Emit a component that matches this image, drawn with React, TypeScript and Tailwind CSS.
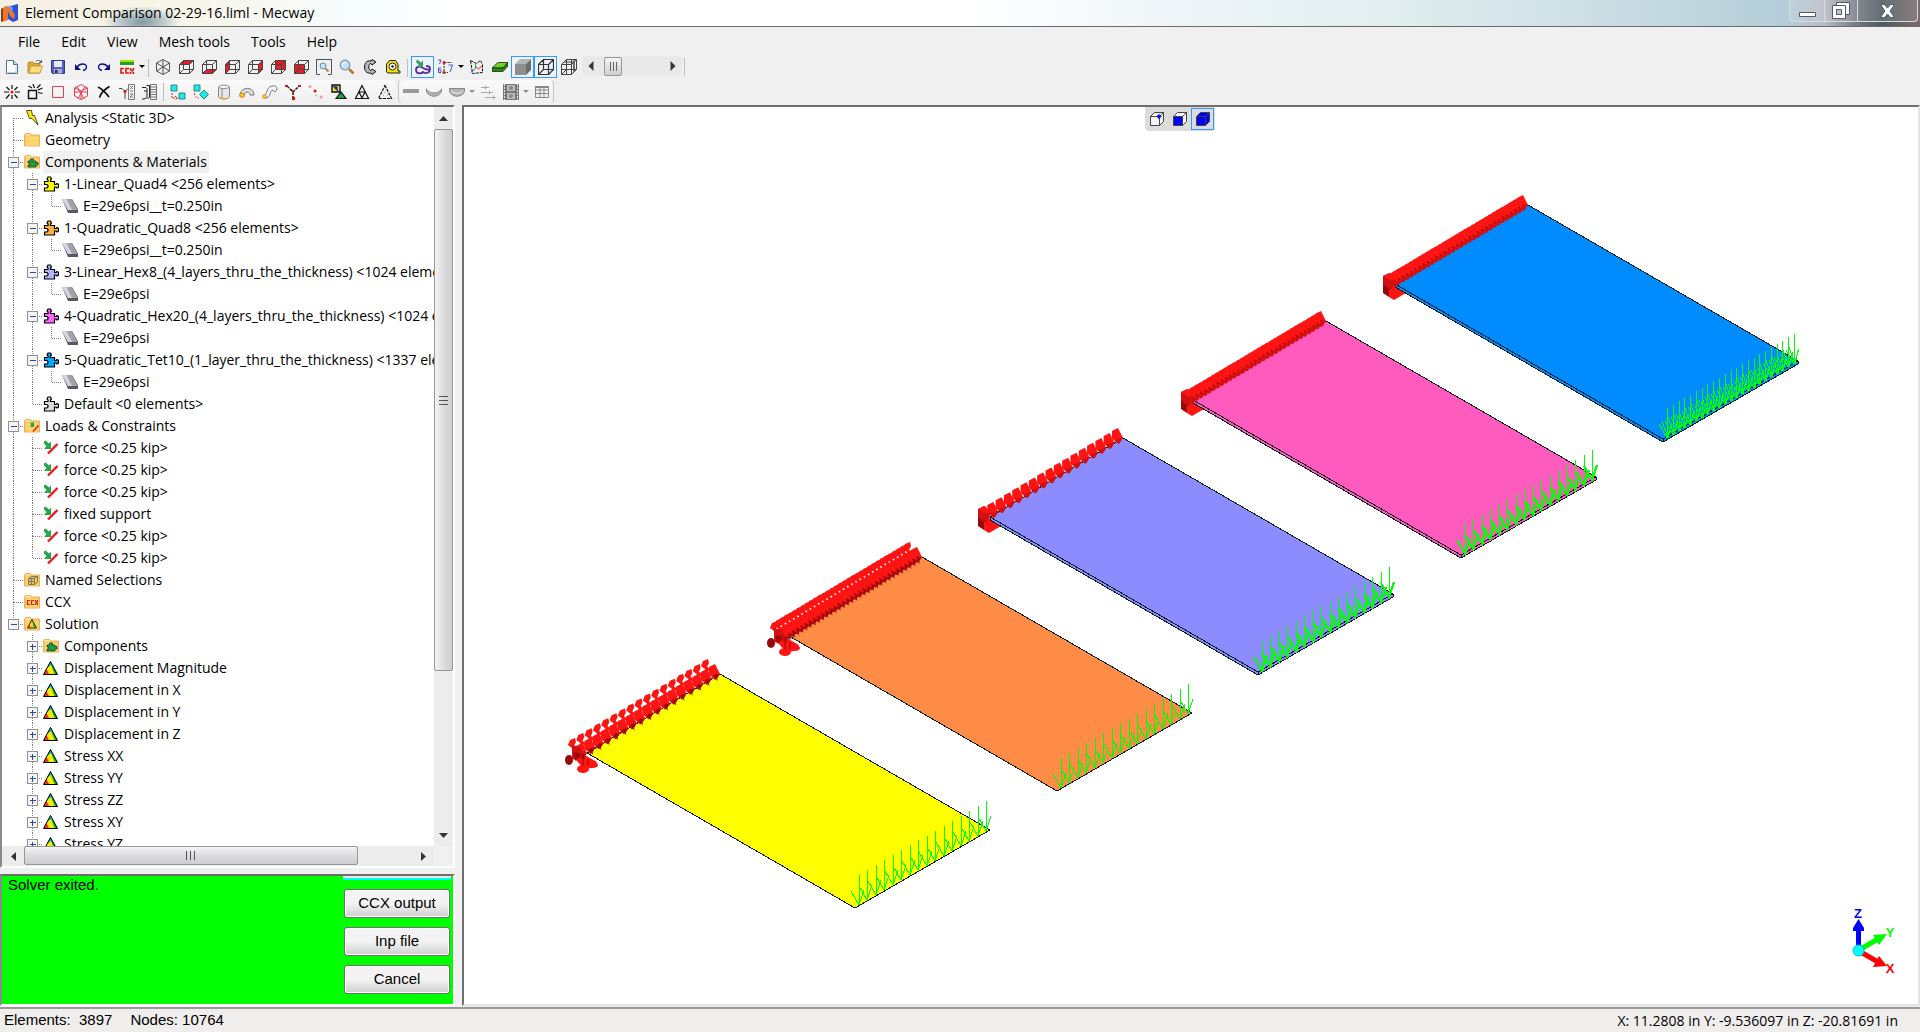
import { useState, type ReactNode } from "react";

type TreeRow = {
  lines: string;
  icon: string;
  label: string;
  selected?: boolean;
};

type Plate = {
  name: string;
  fill: string;
  x: number;
  y: number;
  thick: number;
  nodes: number;
  discs: boolean;
  arrows: number;
  bold: boolean;
};

// one letter per 19px column: f first, v through, t branch, l last, m/e open, p closed
const treeRows: TreeRow[] = [
  { lines: "f", icon: "bolt", label: "Analysis <Static 3D>" },
  { lines: "t", icon: "folder", label: "Geometry" },
  { lines: "m", icon: "folderPuzzle", label: "Components & Materials", selected: true },
  { lines: "vm", icon: "puzzle:#ffff00", label: "1-Linear_Quad4 <256 elements>" },
  { lines: "vvl", icon: "material", label: "E=29e6psi__t=0.250in" },
  { lines: "vm", icon: "puzzle:#ffb040", label: "1-Quadratic_Quad8 <256 elements>" },
  { lines: "vvl", icon: "material", label: "E=29e6psi__t=0.250in" },
  { lines: "vm", icon: "puzzle:#b4b4ff", label: "3-Linear_Hex8_(4_layers_thru_the_thickness) <1024 elements>" },
  { lines: "vvl", icon: "material", label: "E=29e6psi" },
  { lines: "vm", icon: "puzzle:#ff66ff", label: "4-Quadratic_Hex20_(4_layers_thru_the_thickness) <1024 elements>" },
  { lines: "vvl", icon: "material", label: "E=29e6psi" },
  { lines: "vm", icon: "puzzle:#00a8ff", label: "5-Quadratic_Tet10_(1_layer_thru_the_thickness) <1337 elements>" },
  { lines: "vvl", icon: "material", label: "E=29e6psi" },
  { lines: "vl", icon: "puzzle:#dcdcdc", label: "Default <0 elements>" },
  { lines: "m", icon: "folderLoad", label: "Loads & Constraints" },
  { lines: "vt", icon: "load", label: "force <0.25 kip>" },
  { lines: "vt", icon: "load", label: "force <0.25 kip>" },
  { lines: "vt", icon: "load", label: "force <0.25 kip>" },
  { lines: "vt", icon: "load", label: "fixed support" },
  { lines: "vt", icon: "load", label: "force <0.25 kip>" },
  { lines: "vl", icon: "load", label: "force <0.25 kip>" },
  { lines: "t", icon: "folderNamed", label: "Named Selections" },
  { lines: "t", icon: "folderCcx", label: "CCX" },
  { lines: "e", icon: "folderResult", label: "Solution" },
  { lines: " p", icon: "folderPuzzle", label: "Components" },
  { lines: " p", icon: "result", label: "Displacement Magnitude" },
  { lines: " p", icon: "result", label: "Displacement in X" },
  { lines: " p", icon: "result", label: "Displacement in Y" },
  { lines: " p", icon: "result", label: "Displacement in Z" },
  { lines: " p", icon: "result", label: "Stress XX" },
  { lines: " p", icon: "result", label: "Stress YY" },
  { lines: " p", icon: "result", label: "Stress ZZ" },
  { lines: " p", icon: "result", label: "Stress XY" },
  { lines: " p", icon: "result", label: "Stress YZ" }
];

const plates: Plate[] = [
  { name: "tet10", fill: "#008cff", x: 1395, y: 284, thick: 3, nodes: 33, discs: false, arrows: 23, bold: false },
  { name: "hex20", fill: "#ff5abe", x: 1193, y: 400, thick: 3, nodes: 33, discs: false, arrows: 16, bold: true },
  { name: "hex8", fill: "#8c8cff", x: 990, y: 517, thick: 3, nodes: 17, discs: false, arrows: 16, bold: true },
  { name: "quad8", fill: "#ff8c46", x: 789, y: 636, thick: 0, nodes: 33, discs: true, arrows: 16, bold: false },
  { name: "quad4", fill: "#ffff00", x: 587, y: 753, thick: 0, nodes: 17, discs: true, arrows: 16, bold: false }
];

function Icon({ children, title }: { children: ReactNode; title?: string }) {
  return (
    <svg width="16" height="16" viewBox="0 0 16 16" fill="none" className="shrink-0" aria-label={title}>
      {children}
    </svg>
  );
}

function Puzzle({ fill }: { fill: string }) {
  return (
    <path
      d="M1.500 5.500h3.500V4L4 3l1-2h2.500l1 2-1 1v1.500h4v3h1.500l1-1 1.500 1v2.500l-1.500 1-1-1h-1.500v4h-10v-3h2.500l1-1v-1.500l-1-1H1.500z"
      fill={fill}
      stroke="#000"
      strokeWidth="1.200"
    />
  );
}

function Folder() {
  return (
    <>
      <path d="M.5 14V3l1-1.500h5l1 1.500h8v11z" fill="#f5c85f" stroke="#efb05a" />
      <path d="M2 4.500h12.500v9H2z" fill="#fdd56c" />
      <path d="M1 3.500 2 2h4l1 1.500z" fill="#f8e6b0" />
    </>
  );
}

function ResultTriangle() {
  return (
    <>
      <path d="M7.500 1.500 14.500 14.500H.5z" fill="#00b140" />
      <path d="M7.500 1.500 11 8 8 6 4 8z" fill="#00b0a8" />
      <path d="M4 8 8 5l3.500 9H4z" fill="#ffe800" />
      <path d="M3.500 9 6 14H1z" fill="#e8342c" />
      <path d="M7.500 1.500 14.500 14.500H.5z" stroke="#000" />
    </>
  );
}

function LoadMark() {
  return (
    <>
      <path d="M1 1.500 2.500.5l3.500 3 2-2v7.500H1L3.500 6 1 3.500z" fill="#22a84b" />
      <path d="M14.500 4 5 13.500" stroke="#f01820" strokeWidth="2.400" />
    </>
  );
}

function TreeIcon({ kind }: { kind: string }) {
  if (kind.startsWith("puzzle:")) {
    return (
      <Icon>
        <Puzzle fill={kind.slice(7)} />
      </Icon>
    );
  }
  switch (kind) {
    case "bolt":
      return (
        <Icon>
          <path d="M2.500.5h5l1 5h2l3.500 9.500-6-6.500H5.500z" fill="#ffee00" stroke="#222" strokeWidth=".8" />
        </Icon>
      );
    case "material":
      return (
        <Icon>
          <path d="M0 1h10l6 10.500v3.500H6z" fill="#5a5a5e" />
          <path d="M0 1h9.500l6 11H6z" fill="#a2a2ac" />
          <path d="M0 1h4.500L10 12H6z" fill="#d4d4de" />
        </Icon>
      );
    case "load":
      return (
        <Icon>
          <LoadMark />
        </Icon>
      );
    case "result":
      return (
        <Icon>
          <ResultTriangle />
        </Icon>
      );
    case "folderPuzzle":
      return (
        <Icon>
          <Folder />
          <path d="M4 7h2.500V5h3v2H12v1.500h2v2.500h-2v2H4v-2h1.500V9H4z" fill="#1f9a3c" stroke="#143" strokeWidth=".8" />
        </Icon>
      );
    case "folderLoad":
      return (
        <Icon>
          <Folder />
          <path d="M6 4l1.500 1L10 4v5H6l1-2z" fill="#22a84b" />
          <path d="M14.500 7.500 9 13.500" stroke="#f01820" strokeWidth="1.500" />
        </Icon>
      );
    case "folderNamed":
      return (
        <Icon>
          <Folder />
          <path d="M4.500 6.500h6v6h-6zM4.500 6.500l3-2h6l-3 2M13.500 4.500v6l-3 2M7.500 6.500v6M4.500 9.500h6" fill="#e8c440" stroke="#77776a" />
        </Icon>
      );
    case "folderCcx":
      return (
        <Icon>
          <Folder />
          <path d="M6 6.500H3.500v4H6M10 6.500H7.500v4H10M11.500 6v1.500l2 2V11M13.500 6v1.500l-2 2V11" stroke="#e01818" strokeWidth="1.200" />
        </Icon>
      );
    case "folderResult":
      return (
        <Icon>
          <Folder />
          <path d="M8 3.500 12.500 12h-9z" fill="#f4dc00" stroke="#222" />
          <path d="M8 4l4 8h-2z" fill="#0a9a50" />
          <path d="M4 12l1.500-3L7 12z" fill="#e8342c" />
        </Icon>
      );
    default:
      return (
        <Icon>
          <Folder />
        </Icon>
      );
  }
}

function TreeLine({ kind }: { kind: string }) {
  const box = kind === "m" || kind === "e" || kind === "p";
  const up = "vtlmep".includes(kind);
  const down = "fvtmp".includes(kind);
  const across = kind !== "v" && kind !== " ";
  return (
    <svg width="19" height="22" viewBox="0 0 19 22" fill="none" className="shrink-0 overflow-visible">
      <g stroke="#808080" strokeDasharray="1 1" shapeRendering="crispEdges">
        {up && <path d="M10.500 0v11" />}
        {down && <path d="M10.500 11v11" />}
        {across && <path d="M11 11.500h10" />}
      </g>
      {box && (
        <g shapeRendering="crispEdges">
          <rect x="5.500" y="6.500" width="10" height="10" rx="1" fill="#f4f4f4" stroke="#919191" />
          <path d="M8 11.500h6" stroke="#2b4a9b" />
          {kind === "p" && <path d="M10.500 9v6" stroke="#2b4a9b" />}
        </g>
      )}
    </svg>
  );
}

const cubeFaces: Record<string, string> = {
  top: "M1.500 5.500 5.500 1.500h10l-4 4z",
  bottom: "M1.500 14.500 5.500 10.500h10l-4 4z",
  left: "M1.500 5.500 5.500 1.500v9l-4 4z",
  right: "M11.500 5.500 15.500 1.500v9l-4 4z",
  back: "M5.500 1.500h10v9h-10z",
  front: "M1.500 5.500h10v9h-10z"
};

function Cube({ face, color = "#e81c24" }: { face?: string; color?: string }) {
  return (
    <Icon title={face}>
      {face && <path d={cubeFaces[face]} fill={color} />}
      <path
        d="M1.500 5.500h10v9h-10zM5.500 1.500h10v9h-10zM1.500 5.500l4-4M11.500 5.500l4-4M1.500 14.500l4-4M11.500 14.500l4-4"
        stroke="#444"
        strokeWidth="1"
      />
    </Icon>
  );
}

function ToolButton({ label, active, children }: { label: string; active?: boolean; children: ReactNode }) {
  return (
    <button
      type="button"
      aria-label={label}
      className={`flex h-[22px] w-[23px] shrink-0 items-center justify-center ${
        active ? "border border-[#3399ff] bg-[#eef3f9]" : "hover:bg-[#dfeaf7]"
      }`}
    >
      {children}
    </button>
  );
}

function Caret({ gray }: { gray?: boolean }) {
  return (
    <svg width="8" height="16" viewBox="0 0 8 16" className="shrink-0">
      <path d="M1 6h6l-3 3z" fill={gray ? "#8c8c8c" : "#000"} />
    </svg>
  );
}

function Separator() {
  return <span className="mx-[2px] h-[18px] w-px shrink-0 bg-[#bdbdbd]" />;
}

function TopToolbar() {
  return (
    <div className="flex h-[24px] shrink-0 items-start">
      <ToolButton label="New">
        <Icon>
          <path d="M2.500 1.500h7l4 4v9h-11z" fill="#fff" stroke="#51718f" />
          <path d="M9.500 1.500v4h4" fill="#c8dcf0" stroke="#51718f" />
          <path d="M12 7v6.500H4" stroke="#b8d0e8" />
        </Icon>
      </ToolButton>
      <ToolButton label="Open">
        <Icon>
          <path d="M1 14V4l1-1h4l1 1.500h6V14z" fill="#e0a838" stroke="#b07818" strokeWidth=".8" />
          <path d="M1.500 14 4 7h11.500L13 14z" fill="#fbdc80" stroke="#c08c28" strokeWidth=".8" />
          <path d="M9 2.500c2-2 4-1 5 .5M14.500 1v2.500H12" stroke="#456" />
        </Icon>
      </ToolButton>
      <ToolButton label="Save">
        <Icon>
          <path d="M1.500 1.500h13v13h-12l-1-1z" fill="#5560c0" stroke="#30388c" />
          <path d="M4 2h8v6H4z" fill="#e4e8fa" />
          <path d="M4 10h8v4.500H4z" fill="#aab0c8" />
          <path d="M5 11h2.500v3H5z" fill="#222a60" />
        </Icon>
      </ToolButton>
      <ToolButton label="Undo">
        <Icon>
          <path d="M4 8c3-4 9-4 9.500 0 0 2-1.500 3-3.500 3.500" stroke="#10108c" strokeWidth="1.300" />
          <path d="M2 5v6h6z" fill="#10108c" />
        </Icon>
      </ToolButton>
      <ToolButton label="Redo">
        <Icon>
          <path d="M12 8C9 4 3 4 2.500 8c0 2 1.500 3 3.500 3.500" stroke="#10108c" strokeWidth="1.300" />
          <path d="M14 5v6H8z" fill="#10108c" />
        </Icon>
      </ToolButton>
      <ToolButton label="Solve with CCX">
        <Icon>
          <path d="M1 1h14v2H1z" fill="#a8e000" />
          <path d="M1 3h14v3H1z" fill="#22a022" />
          <path d="M5 9.500H2v4.500h3M10 9.500H7V14h3M11.500 9v1.500l3 3V15M14.500 9v1.500l-3 3V15" stroke="#e81010" strokeWidth="1.600" />
        </Icon>
      </ToolButton>
      <span className="mt-[3px] flex">
        <Caret />
        <Separator />
      </span>
      <ToolButton label="Isometric view">
        <Icon>
          <path d="M8 .5 14.500 4v8L8 15.500 1.500 12V4zM8 .5v15M1.500 4l13 8M14.500 4l-13 8" stroke="#555" />
        </Icon>
      </ToolButton>
      {["top", "bottom", "left", "right", "back", "front"].map((face) => (
        <ToolButton key={face} label={`View ${face}`}>
          <Cube face={face} />
        </ToolButton>
      ))}
      <ToolButton label="Fit to window">
        <Icon>
          <path d="M4 .5H.5v15H4M12 .5h3.500v15H12M.5.5h15" stroke="#4c5260" />
          <circle cx="7" cy="7" r="3" fill="#c4e2f8" stroke="#6a8cae" />
          <path d="M9.500 9.500 12.500 12.500" stroke="#c08030" strokeWidth="2" />
        </Icon>
      </ToolButton>
      <ToolButton label="Zoom">
        <Icon>
          <path d="M10 10l4.500 4.500" stroke="#b87828" strokeWidth="2.600" />
          <circle cx="6" cy="6" r="4.800" fill="#c4e2f8" stroke="#7892b0" strokeWidth="1.200" />
          <path d="M3.500 5.500c.5-1.500 1.500-2 3-2" stroke="#fff" strokeWidth="1.200" />
        </Icon>
      </ToolButton>
      <ToolButton label="Rotate">
        <Icon>
          <path d="M9 2C4 1 2.500 5 2.500 8S4 15 9 14l1 1.500 4-3-4-2.500-1 1.500c-3 0-3-7 0-7l1 1.500 4-3-4-2.500z" fill="#b8b8bc" stroke="#111" />
        </Icon>
      </ToolButton>
      <ToolButton label="Measure">
        <Icon>
          <path d="M1.500 13V5l3-3.500h6L13 5v7h2v2H3z" fill="#f4e400" stroke="#222" />
          <circle cx="7.500" cy="7.500" r="3.500" fill="#fff" stroke="#222" />
          <circle cx="7.500" cy="7.500" r="1.200" fill="#111" />
        </Icon>
      </ToolButton>
      <span className="mt-[3px] flex px-px">
        <Separator />
      </span>
      <ToolButton label="Show loads" active>
        <Icon>
          <path d="M1 11c0-4 4-4 7-2s7 2 7 0-2-2-4-2M1 11c0 4 5 4 7 2 3 2 7 1 7-3" stroke="#5a2ca0" strokeWidth="1.800" />
          <path d="M2 .5l4 3 2-2V8H2l2-2-3-3z" fill="#36a060" />
        </Icon>
      </ToolButton>
      <ToolButton label="Node numbers">
        <Icon>
          <path d="M6.500 3.500h7M6 4v9M6 13.500h4" stroke="#222" strokeDasharray="2 1" />
          <circle cx="6" cy="3.500" r="1.500" fill="#e01818" />
          <circle cx="6" cy="13.500" r="1.500" fill="#e01818" />
          <path d="M0 1h3L1.500 5M3 9H.5v4.500H3v-2.500H1M10.500 6h4L12 13" stroke="#3858e0" />
        </Icon>
      </ToolButton>
      <span className="mt-[3px] flex">
        <Caret />
      </span>
      <ToolButton label="Element axes">
        <Icon>
          <path d="M1.500 1.500l6 3 4-3 2 4v8l-10 1z" stroke="#111" strokeDasharray="3 1" />
          <path d="M6.500 9.500V4" stroke="#20b040" />
          <path d="M6 9.500 2 13.500" stroke="#2040e0" />
          <path d="M6.500 7.500l3 2.500L13 7" stroke="#e02020" />
        </Icon>
      </ToolButton>
      <ToolButton label="Shell thickness">
        <Icon>
          <path d="M0 9 6 3.500h10L11 9z" fill="#6fd616" stroke="#223" strokeWidth=".8" />
          <path d="M0 9h11l5-5.500V7l-5 5.500H0z" fill="#2a8a10" stroke="#223" strokeWidth=".8" />
        </Icon>
      </ToolButton>
      <ToolButton label="Show faces" active>
        <Icon>
          <path d="M0 5 5 0h11l-5 5z" fill="#b4b4b4" />
          <path d="M0 5h11v11H0z" fill="#8e8e8e" />
          <path d="M11 5l5-5v11l-5 5z" fill="#6c6c6c" />
        </Icon>
      </ToolButton>
      <ToolButton label="Show wireframe" active>
        <Icon>
          <path
            d="M.5 5.500h10v10H.5zM5.500.5h10v10h-10zM.5 5.500l5-5M10.500 5.500l5-5M.5 15.500l5-5M10.500 15.500l5-5"
            stroke="#333"
            strokeWidth="1.200"
          />
        </Icon>
      </ToolButton>
      <ToolButton label="Show element edges">
        <Icon>
          <path
            d="M.5 5.500h10v10H.5zM5.500.5h10v10h-10zM.5 5.500l5-5M10.500 5.500l5-5M.5 15.500l5-5M10.500 15.500l5-5M5.500 5v10M0 10.500h10M3 3h10v10M10.500 0v11M13 0v12"
            stroke="#444"
          />
        </Icon>
      </ToolButton>
      <div className="ml-[2px] flex h-[20px] w-[100px] items-center rounded-sm bg-[#e9e9e9] px-[6px]">
        <button type="button" aria-label="Scroll left" className="w-[16px]">
          <svg width="6" height="10" viewBox="0 0 6 10">
            <path d="M5.500 0v10L.5 5z" fill="#333" />
          </svg>
        </button>
        <span className="flex h-[19px] w-[18px] items-center justify-center gap-[2px] rounded-[2px] border border-[#979797] bg-gradient-to-b from-[#f4f4f4] to-[#cfd0d2]">
          <i className="h-[9px] w-px bg-[#666]" />
          <i className="h-[9px] w-px bg-[#666]" />
          <i className="h-[9px] w-px bg-[#666]" />
        </span>
        <button type="button" aria-label="Scroll right" className="ml-auto">
          <svg width="6" height="10" viewBox="0 0 6 10">
            <path d="M.5 0v10l5-5z" fill="#333" />
          </svg>
        </button>
      </div>
      <span className="mt-[2px] flex">
        <Separator />
      </span>
    </div>
  );
}

function MeshToolbar() {
  return (
    <div className="flex h-[25px] shrink-0 items-start">
      <div className="flex h-[23px] items-center rounded-r bg-gradient-to-b from-[#fafafa] to-[#efefef]">
        <ToolButton label="New node">
          <Icon>
            <path d="M8 5V1M5.500 6 2.500 3M10.500 6l3-3M5 8H0M11 8h5M5.500 10.500l-3.500 4M10.500 10.500l3 3.500M8 11v4" stroke="#111" strokeWidth="1.200" />
            <circle cx="8" cy="8" r="1.500" fill="#e01010" />
          </Icon>
        </ToolButton>
        <ToolButton label="New element">
          <Icon>
            <path d="M1.500 6.500h8v8h-8z" stroke="#111" strokeWidth="1.400" />
            <path d="M7.500 4 6 0M10 4l3.500-3.500M11 6l4.500-2M11 8.500l4.500 1M5 4 1.500 2" stroke="#111" strokeWidth="1.200" />
          </Icon>
        </ToolButton>
        <ToolButton label="Select faces">
          <Icon>
            <path d="M2.500 2.500h11v11h-11z" stroke="#e04058" />
          </Icon>
        </ToolButton>
        <ToolButton label="Select elements">
          <Icon>
            <path d="M8 .5 14.500 4v8L8 15.500 1.500 12V4zM8 7v8.500M1.500 4 8 7l6.500-3M4 2.500l7 12M12 2.500l-7 12M1.500 8h13" stroke="#e04058" />
          </Icon>
        </ToolButton>
        <ToolButton label="Delete">
          <Icon>
            <path d="M2 3c4 2 8 6 11 10M13.500 2.500C9 5 5 9 3.500 13.500" stroke="#111" strokeWidth="1.800" />
          </Icon>
        </ToolButton>
        <ToolButton label="Node coordinates">
          <Icon>
            <path d="M0 4.500h3l3 3M6 7.500V15M6 7.500l3-3" stroke="#444" />
            <circle cx="6" cy="7.500" r="1.500" fill="#e01010" />
            <path d="M9.500.5h6v15h-6zM11 2l3 3M14 2l-3 3M11 7h3M11 10h3l-3 3h3" stroke="#777" />
          </Icon>
        </ToolButton>
        <ToolButton label="Element properties">
          <Icon>
            <path d="M0 3.500h4l1 1v9l-3 1.500H0M2 7h3M4.500 1.500h3v12l-2 1" stroke="#222" />
            <path d="M8.500.5h6v15h-6zM9 3h5M9 5.500h5M9 8h5M9 10.500h5M9 13h5" stroke="#777" />
          </Icon>
        </ToolButton>
        <Separator />
        <ToolButton label="Translate">
          <Icon>
            <path d="M1 1h6v6H1zM9 9h6v6H9z" fill="#20e8f0" stroke="#387" />
            <path d="M2 9v5h5M5 12l2.500 2L5 16" stroke="#c02020" strokeDasharray="2 1" />
          </Icon>
        </ToolButton>
        <ToolButton label="Rotate copy">
          <Icon>
            <path d="M1 1h6v6H1zM11 6l4.500 4.500L11 15l-4.500-4.500z" fill="#20e8f0" stroke="#387" />
            <path d="M1.500 9c0 3 1 4 4 5" stroke="#c02020" strokeDasharray="2 1" />
          </Icon>
        </ToolButton>
        <ToolButton label="Extrude">
          <Icon>
            <path d="M2.500 3v10c2 2.500 9 2.500 11 0V3" fill="#e8e8ea" stroke="#888" />
            <path d="M2.500 3c2-2.500 9-2.500 11 0-2 2-9 2-11 0zM6 4.500v10" fill="#fff" stroke="#888" />
            <path d="M3 13.500c2 2 8 2 10 0" stroke="#f0a020" />
          </Icon>
        </ToolButton>
        <ToolButton label="Revolve">
          <Icon>
            <path d="M1 12c0-10 14-10 14-1h-4c0-4-6-4-6 1z" fill="#ddd" stroke="#777" />
            <path d="M1 9.500h4V13H1z" fill="#ffd800" stroke="#e08020" />
          </Icon>
        </ToolButton>
        <ToolButton label="Sweep">
          <Icon>
            <path d="M3 14c7 0 4-8 8-8 1 1 1 2 2 2 4-4 1-7-3-6-6 1-4 8-7 8" fill="#f4f4f4" stroke="#777" />
            <circle cx="2.500" cy="12.500" r="1.800" fill="#ffd800" stroke="#e08020" />
          </Icon>
        </ToolButton>
        <ToolButton label="Merge nodes">
          <Icon>
            <path d="M2 2l6 6 6-6M8 8v6" stroke="#111" strokeWidth="1.400" strokeDasharray="3 1" />
            <path d="M0 1h3v2H0zM13 1h3v2h-3zM7 13h3v3H7zM7 6h2v2H7z" fill="#e01010" />
          </Icon>
        </ToolButton>
        <ToolButton label="Insert nodes">
          <Icon>
            <circle cx="2" cy="2.500" r="1.500" fill="#e8a0a0" />
            <circle cx="7" cy="7" r="1.500" fill="#e01010" />
            <circle cx="8" cy="11.500" r="1" fill="#e8a0a0" />
            <circle cx="13" cy="13" r="1.500" fill="#e8a0a0" />
          </Icon>
        </ToolButton>
        <ToolButton label="Scale">
          <Icon>
            <path d="M1 1h8v7H1z" fill="#ffee00" stroke="#111" strokeWidth="1.400" />
            <path d="M3 3h3v3zM3 3l7 7" fill="#2030c0" stroke="#2030c0" strokeWidth="1.300" />
            <path d="M5 14.500 10 8l5 6.500z" fill="#20a040" stroke="#111" strokeWidth="1.200" />
          </Icon>
        </ToolButton>
        <ToolButton label="Refine">
          <Icon>
            <path d="M8 1.500 14.500 14.500h-13zM5 8h6L8 14z" stroke="#111" strokeWidth="1.200" />
          </Icon>
        </ToolButton>
        <ToolButton label="Smooth">
          <Icon>
            <path d="M8 1.500 14.500 14.500h-13z" stroke="#111" strokeWidth="1.200" strokeDasharray="3 1" />
            <path d="M8 8v1M6 11h1M10 11h1" stroke="#888" />
          </Icon>
        </ToolButton>
      </div>
      <div className="ml-[2px] flex h-[23px] items-center rounded border-x border-[#c4c4c4] bg-gradient-to-b from-[#fafafa] to-[#efefef]">
        <ToolButton label="Undeformed">
          <Icon>
            <path d="M0 5h16v4H0z" fill="#999" />
          </Icon>
        </ToolButton>
        <ToolButton label="Deformed">
          <Icon>
            <path d="M0 4.500c3 6 13 6 16 0l-1 4c-3 5-11 5-14 0z" fill="#b4b4b4" stroke="#888" />
          </Icon>
        </ToolButton>
        <ToolButton label="Deformed and undeformed">
          <Icon>
            <path d="M0 4.500h16l-1 4c-3 5-11 5-14 0z" fill="#b4b4b4" stroke="#888" />
            <path d="M2 7c4 3 8 3 12 0" stroke="#f4f4f4" />
          </Icon>
        </ToolButton>
        <Caret gray />
        <ToolButton label="Deformation scale">
          <Icon>
            <path d="M1 3.500h8M1 8.500h12M5 13.500h11M5.500 1.500v4M9.500 6.500v4M13.500 11.500v4" stroke="#aaa" />
          </Icon>
        </ToolButton>
        <ToolButton label="Animate">
          <Icon>
            <path d="M0 0h16v16H0z" fill="#777" />
            <path d="M4 1h8v6H4zM4 9h8v6H4z" fill="#bbb" />
            <path d="M1.500 0v16M14.500 0v16" stroke="#e4e4e4" strokeDasharray="2 1" />
            <circle cx="8" cy="4" r="2" fill="#888" />
            <circle cx="8" cy="12" r="2" fill="#888" />
          </Icon>
        </ToolButton>
        <Caret gray />
        <ToolButton label="Table">
          <Icon>
            <path d="M1.500 2.500h13v11h-13zM1.500 6h13M1.500 9.500h13M6 3v11M10 3v11" stroke="#888" />
            <path d="M1 2h14v2H1z" fill="#888" />
          </Icon>
        </ToolButton>
      </div>
    </div>
  );
}

function SupportNode({ x, y, discs, dense }: { x: number; y: number; discs: boolean; dense: boolean }) {
  return (
    <g transform={`translate(${x} ${y})`}>
      {discs && (
        <>
          <path d="M-19-8l2-5 5-2 1 4-2 4 2 6-3 1-1-5z" fill="#ff1414" />
          <path d="M-14-8l8 6-1 2-7-5z" fill="#ff1414" />
        </>
      )}
      <path d="M-11-7l6-3L0 0l-4 5-7-4z" fill="#ff1414" />
      <path d="M-9 2l9-3-3 6-2 1z" fill="#d21010" />
      {dense && <path d="M-7 0l3-1v3l-3 1z" fill="#960a0a" />}
      {discs && <path d="M-5 0l4 1-2 3 1 3-4-4z" fill="#960a0a" />}
    </g>
  );
}

function PlateShape({ plate }: { plate: Plate }) {
  const { x, y, thick, nodes, arrows } = plate;
  // drawn back to front
  const nodeList = Array.from({ length: nodes }, (_, i) => i / (nodes - 1)).reverse();
  const arrowList = Array.from({ length: arrows }, (_, i) => i / (arrows - 1));
  const tip = thick ? 154 : 152;
  return (
    <g>
      {plate.discs ? (
        <>
          <path d={`M${x - 6} ${y}l16 9-5 6-8 1-8-9z`} fill="#ff1414" />
          <ellipse cx={x - 4} cy={y + 16} rx="6" ry="4" fill="#ff1414" />
          <ellipse cx={x + 6} cy={y + 12} rx="5" ry="3" fill="#ff1414" />
          <path d={`M${x - 4} ${y + 5}v8M${x + 1} ${y + 6}v7`} stroke="#960a0a" />
        </>
      ) : (
        <path d={`M${x - 6} ${y + 13}l5 3 12-7-11-8-6 4z`} fill="#ff1414" />
      )}
      <path
        d={`M${x} ${y}l133-79 270 156v${thick}l-135 78L${x} ${y + thick}z`}
        fill={plate.fill}
        stroke="#0a2020"
        shapeRendering="crispEdges"
      />
      {thick > 0 && (
        <path
          d={`M${x} ${y}l268 155 135-78M${x + 268} ${y + 155}v3`}
          stroke="#0a2020"
          fill="none"
          shapeRendering="crispEdges"
        />
      )}
      {nodeList.map((t) => (
        <SupportNode key={t} x={x + 133 * t} y={y - 79 * t} discs={plate.discs} dense={nodes > 17} />
      ))}
      {plate.discs ? (
        <>
          <ellipse cx={x - 18} cy={y + 7} rx="4" ry="5" fill="#960a0a" />
          <path d={`M${x - 15} ${y - 8}l8 2 4 7-7 6-5-1z`} fill="#d21010" />
          <path d={`M${x - 13} ${y - 1}l7 2-6 7z`} fill="#960a0a" />
        </>
      ) : (
        <>
          <path d={`M${x - 12} ${y - 8}l6-3 7 8-5 8-8 2z`} fill="#d21010" />
          <path d={`M${x - 12} ${y - 8}l7-3 5 6-3 2z`} fill="#ff1414" />
          <path d={`M${x - 12} ${y}v9l6 4v-8z`} fill="#960a0a" />
        </>
      )}
      <g stroke="#00ff00" fill="none" strokeWidth="1" shapeRendering="crispEdges">
        {arrowList.map((t) => {
          const ax = Math.round(x + 272 + 127 * t);
          const ay = Math.round(y + tip - 74 * t);
          return (
            <g key={t}>
              <path d={`M${ax + 0.5} ${ay}v-30`} />
              <path d={`M${ax - 8} ${ay - 14}l8 14 5-15`} strokeWidth={plate.bold ? 2 : 1} />
              {arrows > 16 && <path d={`M${ax - 5} ${ay - 17}l6 17 3-13`} />}
            </g>
          );
        })}
      </g>
    </g>
  );
}

function Scene() {
  return (
    <svg viewBox="464 107 1454 897" preserveAspectRatio="xMinYMin meet" className="block h-full w-full">
      {plates.map((plate) => (
        <PlateShape key={plate.name} plate={plate} />
      ))}
      <path d="M1859 950l19-11" stroke="#00ff00" strokeWidth="5" />
      <path d="M1873 935l14-1-8 11z" fill="#00ff00" />
      <path d="M1859 951l19 11" stroke="#ff0000" strokeWidth="5" />
      <path d="M1879 956l8 10-14 1z" fill="#ff0000" />
      <path d="M1858.500 950v-20" stroke="#0000ff" strokeWidth="5" />
      <path d="M1858.500 919l5.500 9v3h-11v-3z" fill="#0000ff" />
      <circle cx="1858.500" cy="950.500" r="5.500" fill="#00ffff" stroke="#00bcd0" />
      <g className="font-['Liberation_Sans',sans-serif] text-[13px] font-bold" textAnchor="middle">
        <text x="1858" y="918" fill="#0000ff">Z</text>
        <text x="1890" y="937" fill="#00ff00">Y</text>
        <text x="1890" y="973" fill="#ff0000">X</text>
      </g>
    </svg>
  );
}

function ModelTree() {
  const [selected, setSelected] = useState(treeRows.findIndex((r) => r.selected));
  return (
    <div className="flex min-h-0 flex-1 flex-col border-2 border-r-white border-b-white border-t-[#6e6e6e] border-l-[#8a8a8a] bg-[#f0f0f0]">
      <div className="flex min-h-0 flex-1">
        <ul className="min-w-0 flex-1 overflow-hidden bg-white pl-px">
          {treeRows.map((row, i) => (
            <li key={i} className="flex h-[22px] items-center">
              {row.lines.split("").map((kind, n) => (
                <TreeLine key={n} kind={kind} />
              ))}
              <span className="ml-[2px] mr-[3px] shrink-0">
                <TreeIcon kind={row.icon} />
              </span>
              <button
                type="button"
                onClick={() => setSelected(i)}
                className={`h-[22px] whitespace-nowrap px-[2px] leading-[22px] ${i === selected ? "bg-[#f0f0f0]" : ""}`}
              >
                {row.label}
              </button>
            </li>
          ))}
        </ul>
        <div className="flex w-[19px] flex-col bg-[#ececec]">
          <button type="button" aria-label="Scroll up" className="flex h-[22px] items-center justify-center">
            <svg width="9" height="5" viewBox="0 0 9 5">
              <path d="M0 5h9L4.500 0z" fill="#333" />
            </svg>
          </button>
          <div className="min-h-0 flex-1">
            <div className="flex h-[78%] flex-col items-center justify-center gap-[3px] rounded-[2px] border border-[#979797] bg-gradient-to-r from-[#f4f4f4] via-[#dcdcde] to-[#cdced0]">
              <i className="h-px w-[9px] bg-[#555]" />
              <i className="h-px w-[9px] bg-[#555]" />
              <i className="h-px w-[9px] bg-[#555]" />
            </div>
          </div>
          <button type="button" aria-label="Scroll down" className="flex h-[22px] items-center justify-center">
            <svg width="9" height="5" viewBox="0 0 9 5">
              <path d="M0 0h9L4.500 5z" fill="#333" />
            </svg>
          </button>
        </div>
      </div>
      <div className="mr-[19px] flex h-[20px] shrink-0 bg-[#ececec]">
        <button type="button" aria-label="Scroll left" className="flex w-[22px] items-center justify-center">
          <svg width="5" height="9" viewBox="0 0 5 9">
            <path d="M5 0v9L0 4.500z" fill="#333" />
          </svg>
        </button>
        <div className="flex-1">
          <div className="flex h-[19px] w-[86%] items-center justify-center gap-[3px] rounded-[2px] border border-[#979797] bg-gradient-to-b from-[#f4f4f4] via-[#dcdcde] to-[#cdced0]">
            <i className="h-[9px] w-px bg-[#555]" />
            <i className="h-[9px] w-px bg-[#555]" />
            <i className="h-[9px] w-px bg-[#555]" />
          </div>
        </div>
        <button type="button" aria-label="Scroll right" className="flex w-[22px] items-center justify-center">
          <svg width="5" height="9" viewBox="0 0 5 9">
            <path d="M0 0v9l5-4.500z" fill="#333" />
          </svg>
        </button>
      </div>
    </div>
  );
}

function SolverPanel() {
  return (
    <div className="mt-[6px] flex h-[132px] shrink-0 justify-between overflow-hidden border-2 border-r-white border-b-white border-t-[#6e6e6e] border-l-[#8a8a8a] bg-[#00ff00] pr-[2px] pl-[6px] font-['Liberation_Sans',sans-serif] text-[15px]">
      <p className="leading-[18px]">Solver exited.</p>
      <div className="flex w-[108px] flex-col items-center gap-[9px]">
        <div className="h-[4px] w-full shrink-0 border-b-2 border-[#00ffff] bg-[#e8e8e8]" />
        {["CCX output", "Inp file", "Cancel"].map((label) => (
          <button
            key={label}
            type="button"
            className="h-[29px] w-[106px] shrink-0 rounded-[3px] border border-[#707070] bg-gradient-to-b from-[#f3f3f3] from-50% to-[#cfcfcf] shadow-[inset_0_0_0_1px_#fcfcfc]"
          >
            {label}
          </button>
        ))}
      </div>
    </div>
  );
}

function TitleBar() {
  return (
    <header className="flex h-[27px] shrink-0 justify-between border-b border-[#6c6c6c] bg-[radial-gradient(ellipse_38px_16px_at_142px_22px,#7f98a2_0%,#a9bcc2b0_60%,transparent_100%),linear-gradient(to_right,#f4f0e2_0%,#f8f5ea_10%,#f6fcfc_18%,#ffffff_24%,#ffffff_50%,#eef5f8_62%,#dfecee_74%,#c8dbe2_85%,#b4cdd8_93%,#b9bcc4_95%,#6a7078_97%,#4d5a60_98%,#7c6a6c_100%)]">
      <div className="flex items-center gap-[6px]">
        <svg width="19" height="20" viewBox="0 0 19 20" className="mb-px">
          <path d="M8 4l6-2 4-1v16l-5 2-5-3z" fill="#2c50d8" />
          <path d="M1 6l5-3 4 1 5 8-1 4-3-2-3-5v8l-6 2z" fill="#e87830" />
          <path d="M1 6l2-1v13l-2 1z" fill="#8a4020" />
          <path d="M9 2l4 3-1 4-3-4z" fill="#6fa0f0" />
        </svg>
        <h1 className="pb-px leading-[22px]">Element Comparison 02-29-16.liml - Mecway</h1>
      </div>
      <div className="mr-[2px] flex h-[22px] rounded-b border border-t-0 border-[#d5dde2] bg-[#ffffff20]">
        <button type="button" aria-label="Minimize" className="flex w-[35px] items-end justify-center border-r border-[#d5dde2] pb-[4px]">
          <svg width="17" height="5" viewBox="0 0 17 5">
            <path d="M.5.5h16v4H.5z" fill="#fff" stroke="#535a66" />
          </svg>
        </button>
        <button type="button" aria-label="Restore" className="flex w-[33px] items-center justify-center border-r border-[#d5dde2]">
          <svg width="18" height="17" viewBox="0 0 18 17" fill="none">
            <path d="M4.500.5h13v12h-13z" fill="#fff" stroke="#535a66" />
            <path d="M.5 3.500h13v13H.5z" fill="#fff" stroke="#535a66" />
            <path d="M4.500 7.500h5v5h-5z" fill="#b9c6ce" stroke="#535a66" />
          </svg>
        </button>
        <button type="button" aria-label="Close" className="flex w-[59px] items-center justify-center">
          <svg width="15" height="14" viewBox="0 0 15 14">
            <path d="M.5.500h4l3 3.500 3-3.500h4L10 7l4.500 6.500h-4l-3-3.500-3 3.500h-4L5 7z" fill="#fff" stroke="#535a66" />
          </svg>
        </button>
      </div>
    </header>
  );
}

export default function App() {
  const [mode, setMode] = useState("solid");
  const modes = [
    { value: "node", label: "Select nodes" },
    { value: "face", label: "Select faces" },
    { value: "solid", label: "Select elements" }
  ];

  return (
    <div className="flex h-screen flex-col overflow-hidden bg-[#f0f0f0] font-['Open_Sans','Noto_Sans',sans-serif] text-[14px] text-black">
      <TitleBar />
      <nav className="flex h-[29px] shrink-0 items-center gap-[21px] pl-[18px]">
        {["File", "Edit", "View", "Mesh tools", "Tools", "Help"].map((item) => (
          <button key={item} type="button">
            {item}
          </button>
        ))}
      </nav>
      <TopToolbar />
      <MeshToolbar />
      <main className="flex min-h-0 flex-1">
        <aside className="flex w-[455px] shrink-0 flex-col">
          <ModelTree />
          <SolverPanel />
        </aside>
        <section className="relative ml-[7px] min-w-0 flex-1 border-2 border-t-[#6e6e6e] border-r-[#e3e3e3] border-b-[#e3e3e3] border-l-[#6e6e6e] bg-white">
          <Scene />
          <div className="absolute top-0 left-1/2 -ml-[46px] flex h-[24px] items-center rounded-b bg-[#dcdcdc] pr-px">
            {modes.map((m) => (
              <button
                key={m.value}
                type="button"
                aria-label={m.label}
                onClick={() => setMode(m.value)}
                className={`flex h-[22px] w-[23px] items-center justify-center ${
                  m.value === mode ? "border border-[#3399ff]" : ""
                }`}
              >
                <svg width="16" height="16" viewBox="0 0 16 16" fill="none">
                  <path d="M1.500 5.500 5.500 1.500h9l-4 4zM10.500 5.500l4-4v9l-4 4z" fill={m.value === "solid" ? "#0000ff" : "#f4f4f4"} stroke="#444" />
                  <path d="M1.500 5.500h9v9h-9z" fill={m.value === "node" ? "#f4f4f4" : "#0000ff"} stroke="#444" />
                  {m.value === "node" && <path d="M10 3l2.500 2.500L10 8 7.500 5.500z" fill="#0000ff" />}
                </svg>
              </button>
            ))}
          </div>
        </section>
      </main>
      <footer className="mt-px flex h-[25px] shrink-0 items-center justify-between border-t-2 border-[#9a9a9a] bg-[#f0eded] pr-[22px] pl-[4px]">
        <p className="flex gap-[18px] font-['Liberation_Sans',sans-serif] text-[15px]">
          <span className="whitespace-pre">Elements:  3897</span>
          <span>Nodes: 10764</span>
        </p>
        <p>X: 11.2808 in Y: -9.536097 in Z: -20.81691 in</p>
      </footer>
    </div>
  );
}
